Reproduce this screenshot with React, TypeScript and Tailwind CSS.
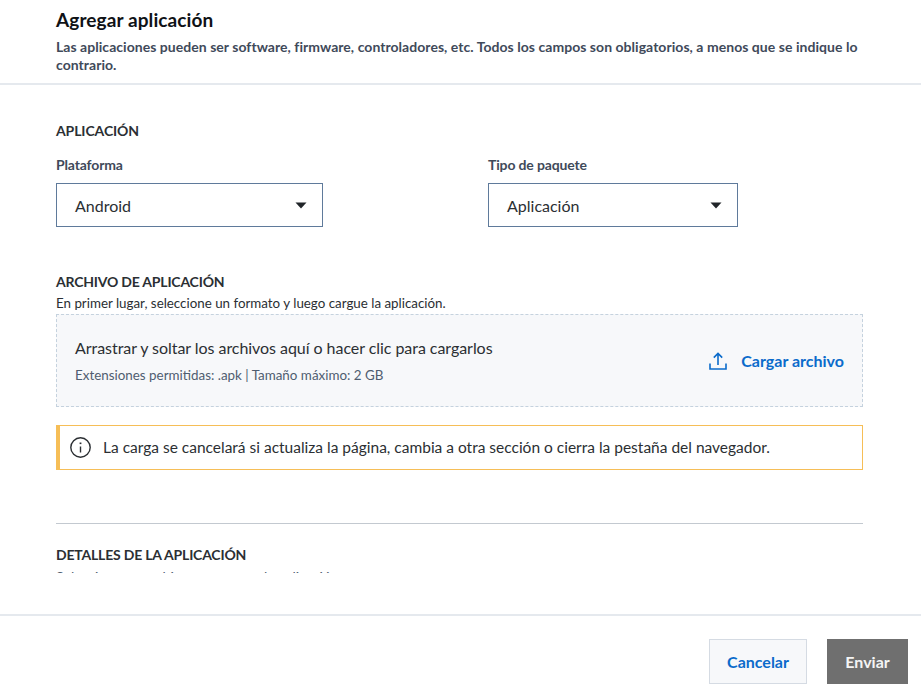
function Caret() {
  return (
    <svg width="12" height="7" viewBox="0 0 12 7" fill="currentColor" aria-hidden className="text-[#212529]">
      <path d="M0.5 0.5h11L6 6.5z" />
    </svg>
  );
}

function SelectBox({ label, value, width }: { label: string; value: string; width: string }) {
  return (
    <div>
      <div className="text-[14px] leading-[17px] font-bold tracking-[-0.15px] text-[#3f4a5a]">{label}</div>
      <div className={`mt-[10px] flex h-[44px] items-center justify-between border border-[#5f7a9b] pl-[18px] pr-[15px] ${width}`}>
        <span className="mt-[2px] text-[16px] text-[#2b2f33]">{value}</span>
        <Caret />
      </div>
    </div>
  );
}

function UploadIcon() {
  return (
    <svg width="18" height="18" viewBox="0 0 18 18" fill="none" stroke="#0b6bcb" strokeWidth="1.6" aria-hidden>
      <path d="M1 11.5V17H17V11.5" />
      <path d="M9 13V1.5M4.8 5.6 9 1.4l4.2 4.2" />
    </svg>
  );
}

function InfoIcon() {
  return (
    <svg width="21" height="21" viewBox="0 0 21 21" fill="none" stroke="#2b2f33" strokeWidth="1.4" aria-hidden>
      <circle cx="10.5" cy="10.5" r="9.7" />
      <path d="M10.5 9.5v6" />
      <path d="M10.5 5.5v1.6" strokeWidth="1.8" />
    </svg>
  );
}

export default function App() {
  return (
    <div className="flex h-[700px] w-[921px] flex-col overflow-hidden bg-white font-['Lato',sans-serif]">
      <header className="h-[85px] shrink-0 border-b-2 border-[#e5e9ee] px-[56px] pt-[8px]">
        <h1 className="text-[19px] leading-[24px] font-bold tracking-[0.1px] text-[#0f1216]">Agregar aplicación</h1>
        <p className="mt-[6px] text-[14px] leading-[18px] font-bold tracking-[0.04px] text-[#3f4a5a]">
          Las aplicaciones pueden ser software, firmware, controladores, etc. Todos los campos son obligatorios, a menos que se indique lo contrario.
        </p>
      </header>

      {/* Scroll area: the next section's text is clipped at the bottom edge */}
      <main className="mb-[40px] h-[489px] shrink-0 overflow-hidden px-[56px] pt-[37px]">
        <h2 className="text-[14px] leading-[17px] font-bold tracking-[-0.1px] text-[#2b2f33]">APLICACIÓN</h2>
        <div className="mt-[17px] flex gap-[165px]">
          <SelectBox label="Plataforma" value="Android" width="w-[267px]" />
          <SelectBox label="Tipo de paquete" value="Aplicación" width="w-[250px]" />
        </div>

        <h2 className="mt-[46px] text-[14px] leading-[17px] font-bold tracking-[-0.2px] text-[#2b2f33]">ARCHIVO DE APLICACIÓN</h2>
        <p className="mt-[5px] text-[13.35px] leading-[16px] text-[#2b2f33]">En primer lugar, seleccione un formato y luego cargue la aplicación.</p>
        <div className="mt-[3px] flex h-[93px] w-[807px] items-center justify-between border border-dashed border-[#c5d2de] bg-[#f7f8fa] px-[18px]">
          <div>
            <div className="text-[16px] leading-[20px] tracking-[-0.05px] text-[#2b2f33]">Arrastrar y soltar los archivos aquí o hacer clic para cargarlos</div>
            <div className="mt-[9px] text-[13.4px] leading-[16px] text-[#4f5d70]">Extensiones permitidas: .apk | Tamaño máximo: 2 GB</div>
          </div>
          <div className="flex items-center gap-[14px]">
            <UploadIcon />
            <span className="text-[16px] font-bold text-[#0b6bcb]">Cargar archivo</span>
          </div>
        </div>

        <div className="mt-[18px] flex h-[45px] w-[807px] items-center gap-[12px] border border-l-4 border-[#f6be57] pl-[10px]">
          <InfoIcon />
          <span className="text-[15.5px] text-[#2b2f33]">La carga se cancelará si actualiza la página, cambia a otra sección o cierra la pestaña del navegador.</span>
        </div>

        <div className="mt-[53px] h-px w-[807px] bg-[#c3c9d0]" />

        <h2 className="mt-[22px] text-[14px] leading-[17px] font-bold tracking-[-0.2px] text-[#2b2f33]">DETALLES DE LA APLICACIÓN</h2>
        <div className="h-[10px] overflow-hidden">
          <p className="mt-[6px] text-[14px] leading-[16px] text-[#4f5d70]">Seleccione un archivo para cargar la aplicación.</p>
        </div>
      </main>

      <footer className="flex flex-1 items-start justify-end gap-[20px] border-t-2 border-[#e5e9ee] pr-[13px] pt-[23px]">
        <button type="button" className="h-[45px] w-[98px] border border-[#d5dbe3] bg-[#f7f8fa] text-[16px] font-bold text-[#0b6bcb]">Cancelar</button>
        <button type="button" className="h-[45px] w-[81px] bg-[#6f6f6f] text-[16px] font-bold text-[#f4f4f4]">Enviar</button>
      </footer>
    </div>
  );
}
